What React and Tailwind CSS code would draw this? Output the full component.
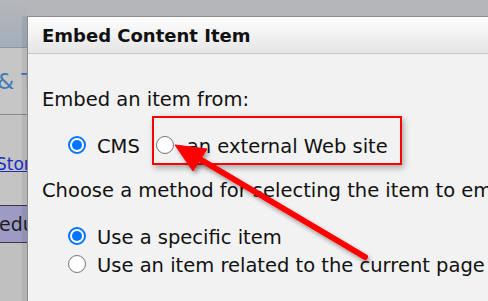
import React from 'react';

const font = { fontFamily: '"DejaVu Sans", Verdana, sans-serif' };

function Radio({ checked }) {
  if (checked) {
    return (
      <span className="mb-[4px] flex h-[18px] w-[18px] shrink-0 items-center justify-center rounded-full border-[2px] border-[#0075ff] bg-white">
        <span className="h-[10px] w-[10px] rounded-full bg-[#0075ff]" />
      </span>
    );
  }
  return <span className="mb-[4px] h-[18px] w-[18px] shrink-0 rounded-full border border-[#767676] bg-white" />;
}

function Arrow() {
  return (
    <svg className="pointer-events-none absolute inset-0" width="488" height="301">
      <defs>
        <filter id="sh" x="-20%" y="-20%" width="140%" height="140%">
          <feDropShadow dx="2" dy="3" stdDeviation="2" floodColor="#000" floodOpacity="0.35" />
        </filter>
      </defs>
      <g filter="url(#sh)" fill="#ff0000" stroke="#ff0000">
        <line x1="365" y1="257" x2="198" y2="158" strokeWidth="6" strokeLinecap="round" />
        <polygon points="175,145 207,149 193,171" strokeWidth="1" strokeLinejoin="round" />
      </g>
    </svg>
  );
}

export default function App() {
  return (
    <div className="relative flex h-[301px] w-[488px] overflow-hidden bg-[#b4b6ba]" style={font}>
      {/* page behind the mask */}
      <div className="flex w-[27px] shrink-0 flex-col overflow-hidden whitespace-nowrap">
        <div className="h-[48px] shrink-0 border-b border-[#8f949a] bg-gradient-to-b from-[#b5b7ba] to-[#a3aebc]" />
        <div className="flex h-[67px] shrink-0 items-center border-b border-[#8a8a8a] bg-[#c6c6c6] pt-[2px]">
          <span className="ml-[-3px] text-[22px] leading-none text-[#3d7ab8]">&amp; T</span>
        </div>
        <div className="flex h-[90px] shrink-0 items-center bg-[#c4c4c4] pt-[8px]">
          <span className="ml-[-4px] text-[17px] leading-none text-[#1a2fc4] underline">Stor</span>
        </div>
        <div className="flex h-[38px] shrink-0 items-center border-y border-[#3a3a3a] bg-[#9d9bc5]">
          <span className="ml-[-1px] text-[19px] leading-none text-[#1c1c1c]">edule</span>
        </div>
        <div className="flex-1 bg-[#c0c0c0]" />
      </div>

      {/* dialog */}
      <div className="relative mt-[16px] flex min-w-[480px] flex-1 flex-col border-l border-t border-[#8c8c8c] bg-[#f2f2f2] shadow-[-5px_0_0_rgba(0,0,0,0.07)]">
        <div className="flex h-[37px] shrink-0 items-center border-b border-[#c8c8c8] bg-gradient-to-b from-[#fefefe] to-[#e5e5e5] pl-[14px]">
          <span className="text-[18px] font-bold text-[#111]">Embed Content Item</span>
        </div>
        <div className="whitespace-nowrap pl-[14px] text-[19.5px] text-[#111]">
          <div className="mt-[34px] leading-[24px]">Embed an item from:</div>

          <div className="mt-[4px] flex items-start pl-[26px]">
            <div className="mt-[19px] flex h-[24px] items-center">
              <Radio checked />
              <span className="ml-[11px] leading-[24px]">CMS</span>
            </div>
            <div className="ml-[12px] flex border-[2px] border-[#ff0000] pb-[4px] pl-[2px] pr-[12px] pt-[17px] shadow-[2px_3px_6px_rgba(0,0,0,0.3)]">
              <div className="flex h-[24px] items-center">
                <Radio />
                <span className="ml-[13px] leading-[24px]">an external Web site</span>
              </div>
            </div>
          </div>

          <div className="mt-[14px] leading-[24px]">Choose a method for selecting the item to embed:</div>

          <div className="mt-[21px] flex flex-col pl-[26px]">
            <div className="flex h-[28px] items-center">
              <Radio checked />
              <span className="ml-[11px] leading-[24px]">Use a specific item</span>
            </div>
            <div className="flex h-[28px] items-center">
              <Radio />
              <span className="ml-[11px] leading-[24px]">Use an item related to the current page</span>
            </div>
          </div>
        </div>
      </div>

      <Arrow />
    </div>
  );
}
